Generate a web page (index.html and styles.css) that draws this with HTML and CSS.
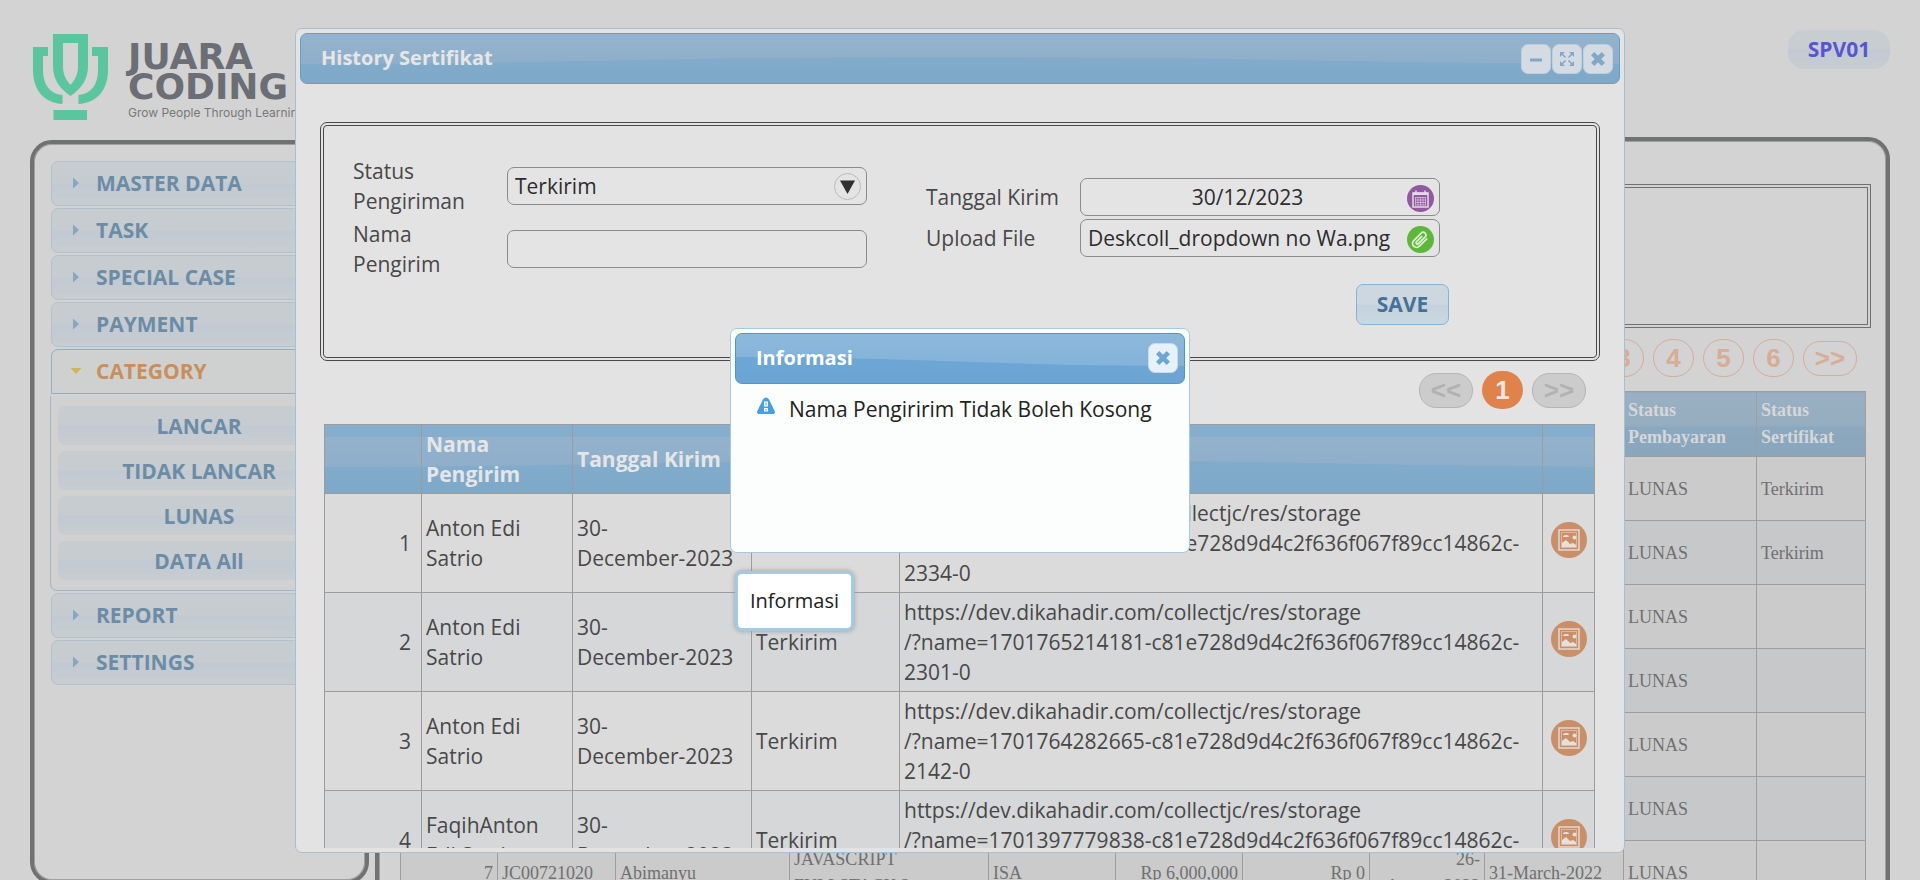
FILE: index.html
```html
<!DOCTYPE html>
<html lang="id">
<head>
<meta charset="utf-8">
<title>History Sertifikat</title>
<link rel="stylesheet" href="styles.css">
</head>
<body>
<svg class="defs" aria-hidden="true">
  <symbol id="i-cross" viewBox="0 0 12 12"><path d="M2 2L10 10M10 2L2 10" stroke="currentColor" stroke-width="3.500" fill="none"/></symbol>
  <symbol id="i-right" viewBox="0 0 8 12"><path d="M1 0.500L7 6L1 11.500Z" fill="currentColor"/></symbol>
  <symbol id="i-image" viewBox="0 0 36 36">
    <circle cx="18" cy="18" r="18" fill="#c98f69"/>
    <rect x="8" y="8" width="20" height="20" fill="none" stroke="#e3d9d2" stroke-width="1.500"/>
    <rect x="10.500" y="10.500" width="15" height="15" fill="none" stroke="#dcb79e"/>
    <circle cx="23.500" cy="15.500" r="2" fill="#e6e0dc"/>
    <path d="M12 15q0-2 3-2q3-.5 3 2z M11 25v-4l4-3l4 4l3-1l3 2v2z" fill="#e6e0dc"/>
  </symbol>
</svg>

<div class="app">
  <header class="topbar">
    <a class="brand" href="#">
      <svg class="brand-mark" viewBox="33 33 76 88" aria-hidden="true">
        <path fill-rule="evenodd" d="M53 34H88V66C88 79 82 88 70.500 96C59 88 53 79 53 66ZM63 43V67C63 74 66 80 70.500 85C75 80 78 74 78 67V43Z"/>
        <path d="M33 47H48V56H43V70C43 85 50 94 62.500 95V104C44 103 33 90 33 70Z"/>
        <path d="M108 47H92V56H98V70C98 85 91 94 78.500 95V104C97 103 108 90 108 70Z"/>
        <path d="M53.500 110H87V120H53.500Z"/>
      </svg>
      <span class="brand-text"><span class="brand-name">JUARA<br>CODING</span><span class="brand-tag">Grow People Through Learning</span></span>
    </a>
    <button class="user">SPV01</button>
  </header>

  <div class="workspace">
    <nav class="sidebar">
      <button class="menu"><svg><use href="#i-right"/></svg>MASTER DATA</button>
      <button class="menu"><svg><use href="#i-right"/></svg>TASK</button>
      <button class="menu"><svg><use href="#i-right"/></svg>SPECIAL CASE</button>
      <button class="menu"><svg><use href="#i-right"/></svg>PAYMENT</button>
      <button class="menu menu-open"><svg class="open-arrow" viewBox="0 0 12 8"><path d="M0.500 1H11.500L6 7Z" fill="currentColor"/></svg>CATEGORY</button>
      <div class="submenu">
        <button class="sub">LANCAR</button>
        <button class="sub">TIDAK LANCAR</button>
        <button class="sub">LUNAS</button>
        <button class="sub">DATA All</button>
      </div>
      <button class="menu"><svg><use href="#i-right"/></svg>REPORT</button>
      <button class="menu"><svg><use href="#i-right"/></svg>SETTINGS</button>
    </nav>

    <main class="content">
      <div class="filter"></div>
      <div class="pager pager-page">
        <button class="pg">3</button><button class="pg">4</button><button class="pg">5</button><button class="pg">6</button><button class="pg pg-wide">&gt;&gt;</button>
      </div>
      <table class="grid">
        <colgroup><col class="w97"><col class="w118"><col class="w174"><col><col class="w127"><col class="w127"><col class="w127"><col class="w115"><col class="w139"><col class="w133"><col class="w109"></colgroup>
        <thead><tr><th></th><th></th><th></th><th></th><th></th><th></th><th></th><th></th><th></th><th>Status Pembayaran</th><th>Status Sertifikat</th></tr></thead>
        <tbody>
          <tr><td></td><td></td><td></td><td></td><td></td><td></td><td></td><td></td><td></td><td>LUNAS</td><td>Terkirim</td></tr>
          <tr><td></td><td></td><td></td><td></td><td></td><td></td><td></td><td></td><td></td><td>LUNAS</td><td>Terkirim</td></tr>
          <tr><td></td><td></td><td></td><td></td><td></td><td></td><td></td><td></td><td></td><td>LUNAS</td><td></td></tr>
          <tr><td></td><td></td><td></td><td></td><td></td><td></td><td></td><td></td><td></td><td>LUNAS</td><td></td></tr>
          <tr><td></td><td></td><td></td><td></td><td></td><td></td><td></td><td></td><td></td><td>LUNAS</td><td></td></tr>
          <tr><td></td><td></td><td></td><td></td><td></td><td></td><td></td><td></td><td></td><td>LUNAS</td><td></td></tr>
          <tr><td class="num">7</td><td>JC00721020</td><td>Abimanyu</td><td>JAVASCRIPT<br>FULLSTACK 2</td><td>ISA</td><td class="num">Rp 6,000,000</td><td class="num">Rp 0</td><td class="num">26-<br>August-2022</td><td>31-March-2022</td><td>LUNAS</td><td></td></tr>
        </tbody>
      </table>
    </main>
  </div>
</div>

<div class="layer layer-modal">
  <section class="window modal" role="dialog" aria-labelledby="modal-title">
    <div class="titlebar">
      <h1 id="modal-title">History Sertifikat</h1>
      <div class="tools">
        <button class="tool" aria-label="Minimize"><svg viewBox="0 0 14 14"><path d="M1 8H13" stroke="currentColor" stroke-width="3"/></svg></button>
        <button class="tool" aria-label="Maximize"><svg viewBox="0 0 14 14"><path d="M0 0H5L0 5ZM14 0V5L9 0ZM0 14V9L5 14ZM14 14H9L14 9Z" fill="currentColor"/><path d="M2 2L5.500 5.500M12 2L8.500 5.500M2 12L5.500 8.500M12 12L8.500 8.500" stroke="currentColor" stroke-width="1.500"/></svg></button>
        <button class="tool" aria-label="Close"><svg><use href="#i-cross"/></svg></button>
      </div>
    </div>
    <div class="modal-body">
      <form class="form">
        <div class="fields">
          <div class="row row-tall"><label for="status"><span>Status Pengiriman</span></label>
            <div class="field"><select id="status"><option>Terkirim</option></select></div></div>
          <div class="row row-tall"><label for="nama"><span>Nama Pengirim</span></label>
            <div class="field"><input id="nama" type="text"></div></div>
        </div>
        <div class="fields">
          <div class="row"><label for="tanggal">Tanggal Kirim</label>
            <div class="field"><input id="tanggal" class="center" type="text" value="30/12/2023">
              <button type="button" class="round" aria-label="Pilih tanggal"><svg viewBox="0 0 27 27"><circle cx="13.500" cy="13.500" r="13.500" fill="#9159a0"/><path d="M6 8H21V22H6ZM9 5.500V9M18 5.500V9" fill="none" stroke="#e3dbe6" stroke-width="1.500"/><path d="M6 7.500H21V10H6Z" fill="#e3dbe6"/><path d="M8 12.500H19M8 15H19M8 17.500H19M8 20H19M8.500 12V20.500M11 12V20.500M13.500 12V20.500M16 12V20.500M18.500 12V20.500" stroke="#d3bfd9" stroke-width="0.800"/></svg></button></div></div>
          <div class="row"><label for="upload">Upload File</label>
            <div class="field"><input id="upload" type="text" value="Deskcoll_dropdown no Wa.png" readonly>
              <button type="button" class="round" aria-label="Pilih file"><svg viewBox="0 0 27 27"><circle cx="13.500" cy="13.500" r="13.500" fill="#5db83a"/><g transform="rotate(45 13.500 13.500)" fill="none" stroke="#dcecd6" stroke-width="1.800"><path d="M17.500 8V19A4 4 0 0 1 9.500 19V7.500A3 3 0 0 1 15 7.500V18A1.300 1.300 0 0 1 12.300 18V10"/></g></svg></button></div></div>
        </div>
        <button type="button" class="save">SAVE</button>
      </form>
      <div class="pager pager-modal">
        <button class="pg pg-wide pg-off">&lt;&lt;</button><button class="pg pg-on">1</button><button class="pg pg-wide pg-off">&gt;&gt;</button>
      </div>
      <table class="history">
        <colgroup><col class="h-no"><col class="h-name"><col class="h-date"><col class="h-status"><col><col class="h-act"></colgroup>
        <thead><tr><th></th><th>Nama Pengirim</th><th>Tanggal Kirim</th><th></th><th></th><th></th></tr></thead>
        <tbody>
          <tr><td class="num">1</td><td>Anton Edi Satrio</td><td>30-<br>December-2023</td><td></td><td>https://dev.dikahadir.com/collectjc/res/storage<br>/?name=1701765443912-c81e728d9d4c2f636f067f89cc14862c-<br>2334-0</td><td class="act"><button aria-label="Lihat"><svg><use href="#i-image"/></svg></button></td></tr>
          <tr><td class="num">2</td><td>Anton Edi Satrio</td><td>30-<br>December-2023</td><td>Terkirim</td><td>https://dev.dikahadir.com/collectjc/res/storage<br>/?name=1701765214181-c81e728d9d4c2f636f067f89cc14862c-<br>2301-0</td><td class="act"><button aria-label="Lihat"><svg><use href="#i-image"/></svg></button></td></tr>
          <tr><td class="num">3</td><td>Anton Edi Satrio</td><td>30-<br>December-2023</td><td>Terkirim</td><td>https://dev.dikahadir.com/collectjc/res/storage<br>/?name=1701764282665-c81e728d9d4c2f636f067f89cc14862c-<br>2142-0</td><td class="act"><button aria-label="Lihat"><svg><use href="#i-image"/></svg></button></td></tr>
          <tr><td class="num">4</td><td>FaqihAnton Edi Satrio</td><td>30-<br>December-2023</td><td>Terkirim</td><td>https://dev.dikahadir.com/collectjc/res/storage<br>/?name=1701397779838-c81e728d9d4c2f636f067f89cc14862c-<br>2142-0</td><td class="act"><button aria-label="Lihat"><svg><use href="#i-image"/></svg></button></td></tr>
        </tbody>
      </table>
    </div>
  </section>
</div>

<div class="layer layer-info">
  <section class="window info" role="alertdialog" aria-labelledby="info-title">
    <div class="titlebar">
      <h2 id="info-title">Informasi</h2>
      <button class="tool" aria-label="Close"><svg><use href="#i-cross"/></svg></button>
    </div>
    <p class="message">
      <svg viewBox="0 0 18 18" aria-hidden="true"><path d="M9 0.500C10.200 0.500 11.200 1.200 12 2.500L17.700 14C18.300 15.800 17.500 17 16 17H2C0.500 17 -0.300 15.800 0.300 14L6 2.500C6.800 1.200 7.800 0.500 9 0.500Z" fill="#459fe0"/><path d="M7 4.500H11V9.500H7ZM7 11H11V14.500H7Z" fill="#fff"/><path d="M8.500 5.500H9.500V8.500H8.500ZM8.500 12H9.500V13.500H8.500Z" fill="#459fe0"/></svg>
      Nama Pengiririm Tidak Boleh Kosong
    </p>
    <div class="tooltip" role="tooltip">Informasi</div>
  </section>
</div>
</body>
</html>
```
FILE: styles.css
```css
* { box-sizing: border-box; }
html, body { height: 100%; }
body {
  margin: 0;
  overflow: hidden;
  background: #d3d3d3;
  color: #484848;
  font: 21px/30px "Open Sans", "Noto Sans", sans-serif;
}
button, input, select { font: inherit; color: inherit; margin: 0; padding: 0; border: 0; background: none; }
button { cursor: pointer; }
h1, h2, p { margin: 0; }
.defs { position: absolute; width: 0; height: 0; }

/* page header */
.app { height: 100vh; overflow: hidden; }
.topbar { display: flex; justify-content: space-between; align-items: flex-start; height: 137px; padding: 30px 30px 0 33px; }
.brand { display: flex; gap: 19px; padding-top: 3px; text-decoration: none; }
.brand-mark { width: 76px; height: 88px; fill: #59c69f; }
.brand-text { display: flex; flex-direction: column; padding-top: 9px; }
.brand-name { color: #6b6e74; font: bold 36px/30px "DejaVu Sans", sans-serif; }
.brand-tag { color: #76787b; font: 12px/14px Inter, sans-serif; margin-top: 4px; white-space: nowrap; }
.user { width: 102px; height: 39px; padding-bottom: 2px; border-radius: 16px; color: #5656d2; font-weight: bold; background: linear-gradient(#c8cdd1 49%, #c2c9d3 51%, #c7cdd1); }

/* sidebar */
.workspace { display: flex; align-items: flex-start; gap: 6px; padding: 0 30px; }
.sidebar, .content { border: 4px solid #707171; box-shadow: inset 0 0 0 1px #a0a0a0; border-radius: 22px; }
.sidebar { display: flex; flex-direction: column; gap: 2px; flex: 0 0 339px; min-height: 744px; margin-top: 3px; padding: 17px 16px 17px 17px; }
.menu {
  display: flex; align-items: center; gap: 16px; height: 45px; padding: 0 20px 2px;
  border: 1px solid #b2c1cc; border-radius: 7px;
  background: linear-gradient(#c7ccd0 48%, #c2c9d3 52%, #c7cdd0);
  color: #6c8ca6; font-weight: bold; text-align: left;
}
.menu svg { width: 8px; height: 12px; color: #86a7c1; }
.menu-open { border-color: #8eadc6; border-radius: 7px 7px 0 0; background: #cfd1d0; color: #c88f5c; gap: 14px; padding-left: 18px; }
.menu .open-arrow { width: 12px; height: 8px; color: #ceb45a; }
.submenu { display: flex; flex-direction: column; gap: 6px; margin-left: -1px; padding: 10px 8px 10px 7px; border: solid #9fb6c7; border-width: 0 1px 1px; border-radius: 0 0 7px 7px; background: #d1d1d1; }
.sub { height: 39px; border-radius: 7px; color: #6c8ca6; font-weight: bold; background: linear-gradient(#c7ccd0 48%, #c2c9d3 52%, #c7cdd0); }

/* page content */
.content { flex: 1; min-width: 0; min-height: 900px; padding: 43px 15px 0; }
.filter { height: 144px; border: 4px double #707070; }
.pager { display: flex; justify-content: flex-end; align-items: center; gap: 9px; font: bold 26px/36px "Liberation Sans", Arial, sans-serif; }
.pager-page { height: 38px; margin-top: 11px; padding-right: 14px; color: #d6ad96; }
.pg { flex: none; width: 41px; height: 38px; border: 1px solid #d6ad96; border-radius: 19px; }
.pg-wide { width: 54px; height: 35px; line-height: 33px; border-radius: 17px; }
.grid { table-layout: fixed; width: auto; min-width: calc(100% - 11px); margin: 14px 5px 0 6px; border-collapse: collapse; font: 18px/27px "Liberation Serif", "Times New Roman", serif; color: #707070; }
.grid th, .grid td { border: 1px solid #9e9e9e; padding: 4px; text-align: left; white-space: nowrap; }
.grid tr { height: 64px; }
.grid thead tr { height: 65px; }
.grid th { color: #d5d7d9; white-space: normal; background: linear-gradient(#9ab0c2, #95adc0 52%, #8ca8be 54%, #8aa6bd); }
.grid td { padding-top: 5px; background: #cbcbcb; }
.grid tr:nth-child(even) td { background: #c7c8ca; }
.grid .num, .history .num { text-align: right; }
.w97 { width: 97px; } .w118 { width: 118px; } .w174 { width: 174px; } .w127 { width: 127px; }
.w115 { width: 115px; } .w139 { width: 139px; } .w133 { width: 133px; } .w109 { width: 109px; }

/* floating windows */
.layer { position: fixed; inset: 0; display: grid; }
.layer-modal { padding: 28px 295px 27px; }
.layer-info { place-items: center; }
.window { padding: 4px; border-radius: 7px; }
.titlebar { display: flex; align-items: center; justify-content: space-between; height: 51px; padding: 0 6px 0 20px; border: 1px solid; border-radius: 7px; }
.titlebar h1, .titlebar h2 { font-size: 20px; line-height: 30px; }
.tools { display: flex; gap: 1px; }
.tool { display: grid; place-items: center; width: 30px; height: 30px; border: 1px solid #bdd0e0; border-radius: 7px; background: #d4dbe3; color: #81a8c7; }
.tool svg { width: 14px; height: 14px; }

.modal { display: flex; flex-direction: column; min-height: 0; border: 1px solid #a5bfd5; background: #e3e3e3; }
.modal .titlebar, .history thead tr {
  background:
    url("data:image/svg+xml,%3Csvg xmlns='http://www.w3.org/2000/svg' width='1300' height='80'%3E%3Cpath d='M0 30C250 30 350 23 650 23S1000 28 1300 30V80H0Z' fill='%2362a0cc' fill-opacity='.28'/%3E%3C/svg%3E") 0 0 / 1300px 80px,
    linear-gradient(#95b3cd, #8aabc7);
}
.modal .titlebar { flex: none; border-color: #689dc6; color: #e6e6e6; background-position: 0 0; }
.modal .titlebar h1 { margin-bottom: 2px; }
.history thead tr { background-position: 0 12px, 0 0; }
.modal-body { flex: 1; min-height: 0; overflow: hidden; padding: 38px 20px 0; }

.form { display: grid; grid-template-columns: 514px 523px; column-gap: 59px; align-items: center; padding: 30px 29px 32px; border: 4px double #484848; border-radius: 7px; }
.fields { display: grid; gap: 3px; }
.row { display: grid; grid-template-columns: 154px 360px; align-items: center; }
.row-tall label span { display: block; width: 120px; }
.field { display: flex; align-items: center; height: 38px; padding: 0 5px 0 7px; border: 1px solid #8b8b8b; border-radius: 7px; background: #e4e4e4; color: #2d2d2d; }
.field input, .field select { flex: 1; min-width: 0; height: 36px; padding-bottom: 1px; outline: 0; }
.field select {
  appearance: none;
  background: url("data:image/svg+xml,%3Csvg xmlns='http://www.w3.org/2000/svg' width='27' height='27'%3E%3Ccircle cx='13.5' cy='13.5' r='13' fill='none' stroke='%23bbb'/%3E%3Cpath d='M6 7.500H21L13.500 21Z' fill='%23303030'/%3E%3C/svg%3E") right center no-repeat;
}
.field .center { text-align: center; }
.round { flex: none; width: 27px; height: 27px; margin-top: 2px; }
.round svg { display: block; width: 27px; height: 27px; }
.save { grid-column: 2; justify-self: end; width: 93px; height: 41px; margin-top: 5px; padding-bottom: 1px; border: 1px solid #86b3d6; border-radius: 7px; color: #457197; font-weight: bold; background: linear-gradient(#cdd7e0 49%, #c4d2df 51%, #cbd8e0); }

.pager-modal { margin: 10px 14px 0 0; height: 38px; }
.pg-off { border: 1px solid #b6b6b6; background: #cccccc; color: #b2b2b2; }
.pg-on { border: 0; background: #df834b; color: #ebe7e4; }

.history { table-layout: fixed; width: calc(100% - 9px); margin: 15px 5px 0 4px; border-collapse: collapse; }
.history th, .history td { border: 1px solid #9c9c9c; padding: 4px; text-align: left; }
.history th { color: #e4e6e8; }
.history tbody tr { height: 99px; background: #dbdbdb; }
.history tbody tr:nth-child(even) { background: #d5d7d9; }
.history .num { padding-right: 10px; }
.history .act { padding: 0; text-align: center; }
.act button { width: 36px; height: 36px; }
.act svg { display: block; width: 36px; height: 36px; }
.h-no { width: 97px; } .h-name { width: 151px; } .h-date { width: 179px; } .h-status { width: 148px; } .h-act { width: 52px; }

.info { position: relative; width: 460px; min-height: 225px; border: 1px solid #a6c9e2; background: #fcfdfd; color: #222; }
.info .titlebar {
  border-color: #4a97d2; color: #fff;
  background:
    url("data:image/svg+xml,%3Csvg xmlns='http://www.w3.org/2000/svg' width='450' height='51'%3E%3Cpath d='M0 23C170 23 260 32 450 32V51H0Z' fill='%234f97cf' fill-opacity='.45'/%3E%3C/svg%3E"),
    linear-gradient(#8cb8db, #80b0d8);
}
.info .tool { border-color: #c5dbec; background: #e6f1fa; color: #6ca7d5; }
.info .tool svg, .tool:last-child svg { width: 16px; height: 16px; }
.message { display: flex; align-items: flex-start; gap: 14px; padding: 10px 20px 0 22px; white-space: nowrap; }
.message svg { flex: none; width: 18px; height: 18px; margin-top: 3px; }
.tooltip { position: absolute; left: 4px; top: 242px; padding: 12px; border: 3px solid #a3c9e4; border-radius: 7px; background: #fff; box-shadow: 0 0 5px #999; font-size: 20px; }
```
